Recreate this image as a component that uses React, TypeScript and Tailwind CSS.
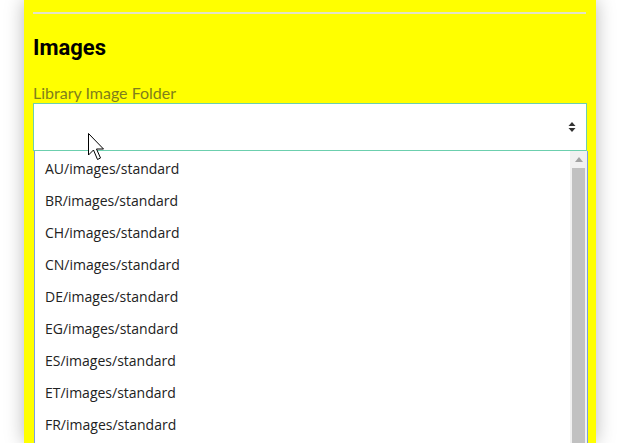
import React from "react";

const items = [
  "AU/images/standard",
  "BR/images/standard",
  "CH/images/standard",
  "CN/images/standard",
  "DE/images/standard",
  "EG/images/standard",
  "ES/images/standard",
  "ET/images/standard",
  "FR/images/standard",
];

export default function App() {
  return (
    <div className="w-[625px] h-[443px] overflow-hidden bg-white relative">
      <div className="ml-[24px] w-[572px] h-[443px] bg-[#ffff00] shadow-[0_0_18px_rgba(0,0,0,0.28)] px-[9px] pt-[12px] relative">
        <div className="h-[2px] bg-[#e3e3c8] mr-[1px]" />
        <h2
          className="mt-[21px] text-[22px] leading-[26px] font-bold text-black"
          style={{ fontFamily: "Roboto, 'Liberation Sans', sans-serif" }}
        >
          Images
        </h2>
        <div
          className="mt-[22px] text-[16px] leading-[20px] text-[#7f7f1c]"
          style={{ fontFamily: "Lato, 'Open Sans', sans-serif" }}
        >
          Library Image Folder
        </div>
        <div className="mt-[0px] h-[48px] bg-white border border-[#6ccfae] flex items-center justify-end pr-[10px]">
          <svg width="8" height="12" viewBox="0 0 8 12">
            <path d="M4 1 L7.5 5 L0.5 5 Z" fill="#333" />
            <path d="M4 11 L7.5 7 L0.5 7 Z" fill="#333" />
          </svg>
        </div>
        <div className="ml-[1px] mr-[-1px] h-[300px] overflow-hidden bg-white border border-[#7b9ee0] border-t-0 flex">
          <div
            className="flex-1 flex flex-col pt-[1px]"
            style={{ fontFamily: "'Open Sans', sans-serif" }}
          >
            {items.map((t) => (
              <div
                key={t}
                className="h-[32px] shrink-0 flex items-center pl-[10px] text-[14px] text-[#222]"
              >
                {t}
              </div>
            ))}
          </div>
          <div className="w-[17px] bg-[#f1f1f1] flex flex-col items-center">
            <div className="h-[17px] shrink-0 flex items-center justify-center">
              <svg width="8" height="5" viewBox="0 0 8 5">
                <path d="M4 0 L8 5 L0 5 Z" fill="#a3a3a3" />
              </svg>
            </div>
            <div className="w-[13px] flex-1 bg-[#c1c1c1]" />
          </div>
        </div>
      </div>
      <svg
        className="absolute left-[88px] top-[133px]"
        width="20"
        height="30"
        viewBox="0 0 20 30"
      >
        <path
          d="M0.5 0.5 L0.5 22 L5.5 17 L9.5 26.5 L12.5 25 L8.5 16 L15.5 16 Z"
          fill="#fff"
          stroke="#000"
          strokeWidth="1"
        />
      </svg>
    </div>
  );
}
